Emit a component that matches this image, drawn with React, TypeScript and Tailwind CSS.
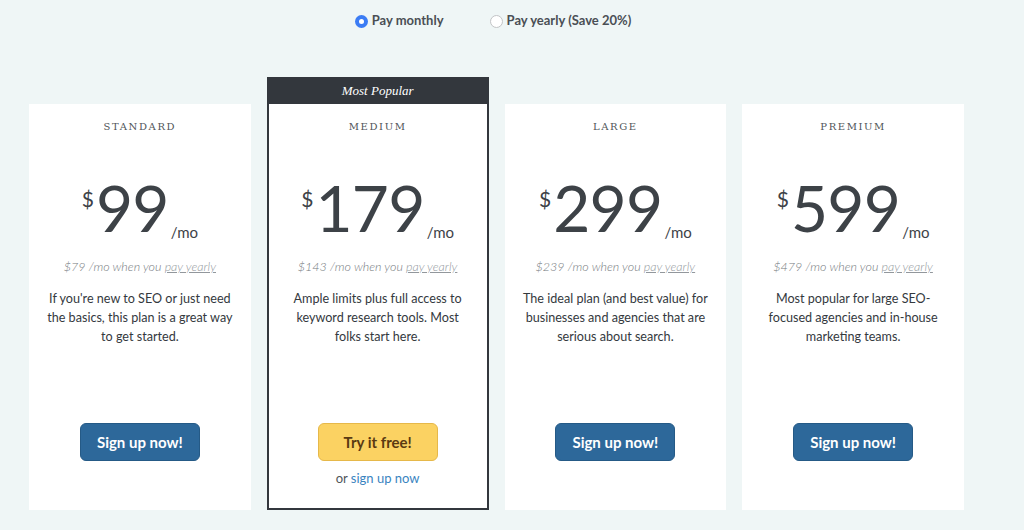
import React from "react";

type Plan = {
  name: string;
  price: string;
  yearly: string;
  desc: string;
  popular?: boolean;
};

const plans: Plan[] = [
  {
    name: "STANDARD",
    price: "99",
    yearly: "$79",
    desc: "If you're new to SEO or just need the basics, this plan is a great way to get started.",
  },
  {
    name: "MEDIUM",
    price: "179",
    yearly: "$143",
    desc: "Ample limits plus full access to keyword research tools. Most folks start here.",
    popular: true,
  },
  {
    name: "LARGE",
    price: "299",
    yearly: "$239",
    desc: "The ideal plan (and best value) for businesses and agencies that are serious about search.",
  },
  {
    name: "PREMIUM",
    price: "599",
    yearly: "$479",
    desc: "Most popular for large SEO-focused agencies and in-house marketing teams.",
  },
];

const PlanBody: React.FC<{ plan: Plan; short?: boolean }> = ({ plan, short }) => (
  <div
    className={`flex flex-col items-center pt-[15px] px-[14px] bg-white ${
      short ? "h-[404px]" : "h-[406px]"
    }`}
  >
    <div className="font-['DejaVu_Serif',serif] text-[10px] leading-[16px] tracking-[0.16em] text-[#505559]">
      {plan.name}
    </div>

    {/* Price */}
    <div className="flex items-start justify-center mt-[41px] text-[#3d4247]">
      <span className="text-[21px] leading-none mt-[12px] mr-[2px]">$</span>
      <span className="text-[64px] leading-none font-normal tracking-[-0.01em]">{plan.price}</span>
      <span className="text-[15px] leading-none mt-[49px] ml-[2px]">/mo</span>
    </div>

    <div className="mt-[18px] text-[12.5px] leading-[18px] italic font-light text-[#767b80]">
      {plan.yearly} /mo when you{" "}
      <span className="underline text-[#92979c]">pay yearly</span>
    </div>

    <p className="mt-[13px] h-[134px] text-[12.6px] leading-[19px] text-[#34393e] text-center">
      {plan.desc}
    </p>

    {plan.popular ? (
      <>
        <button className="w-[120px] h-[38px] rounded-[6px] bg-[#fbd262] border border-[#e6b84a] text-[#5a3a12] text-[15px] font-bold">
          Try it free!
        </button>
        <div className="mt-[8px] text-[13px] leading-[19px] text-[#50555a]">
          or <span className="text-[#3a84bf]">sign up now</span>
        </div>
      </>
    ) : (
      <button className="w-[120px] h-[38px] rounded-[6px] bg-[#2d689a] border border-[#255a86] text-white text-[15px] font-bold">
        Sign up now!
      </button>
    )}
  </div>
);

const App: React.FC = () => {
  return (
    <div className="min-h-screen w-full bg-[#eff6f6] font-['Lato',sans-serif] pb-[20px]">
      <div className="w-[935px] ml-[29px]">
        {/* Billing toggle */}
        <div className="flex items-center justify-center gap-[46px] pt-[12px] pr-[7px] h-[30px] text-[13px] font-bold text-[#4a4f55]">
          <label className="flex items-center gap-[4px]">
            <span className="w-[13px] h-[13px] rounded-full bg-[#3b7cf4] flex items-center justify-center">
              <span className="w-[5px] h-[5px] rounded-full bg-white" />
            </span>
            Pay monthly
          </label>
          <label className="flex items-center gap-[4px]">
            <span className="w-[13px] h-[13px] rounded-full bg-white border border-[#c2c4c6]" />
            Pay yearly (Save 20%)
          </label>
        </div>

        {/* Plans */}
        <div className="grid grid-cols-4 gap-[16px] items-end mt-[47px]">
          {plans.map((plan) =>
            plan.popular ? (
              <div key={plan.name} className="border-2 border-[#33373d] bg-[#33373d]">
                <div className="h-[25px] flex items-center justify-center pb-[2px] font-['Liberation_Serif',serif] italic text-[13px] text-white">
                  Most Popular
                </div>
                <PlanBody plan={plan} short />
              </div>
            ) : (
              <PlanBody key={plan.name} plan={plan} />
            )
          )}
        </div>
      </div>
    </div>
  );
};

export default App;
